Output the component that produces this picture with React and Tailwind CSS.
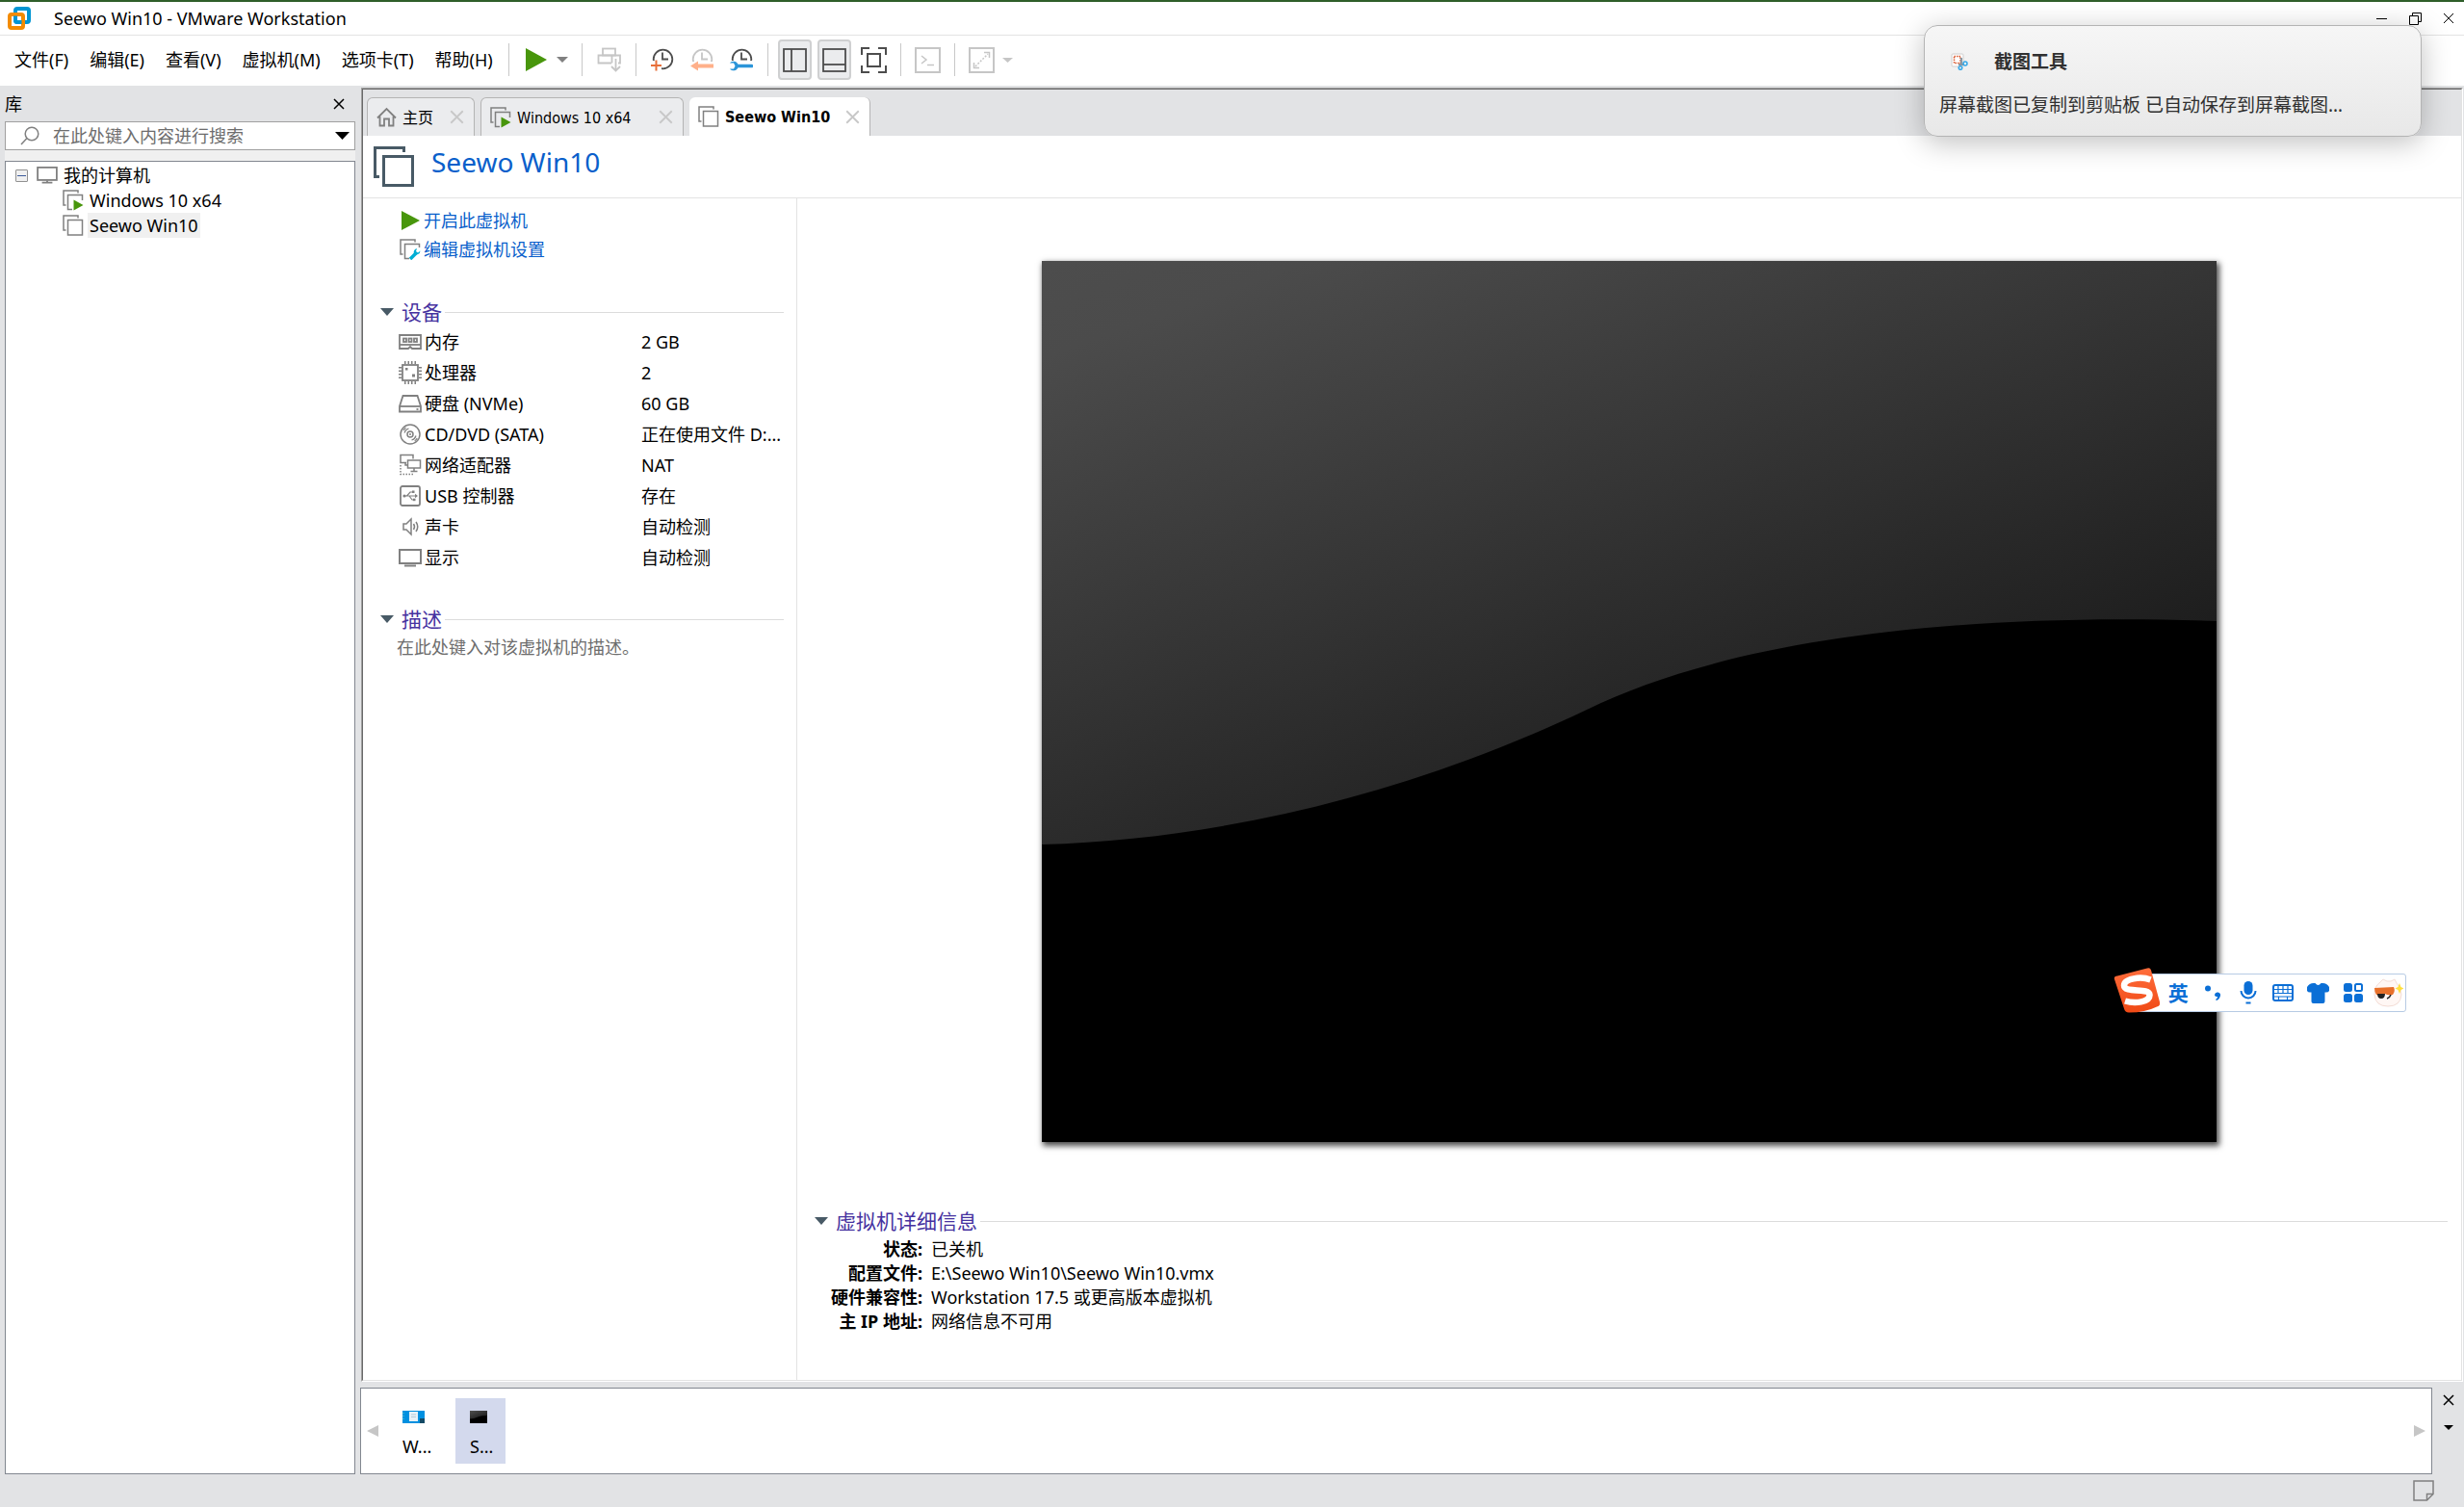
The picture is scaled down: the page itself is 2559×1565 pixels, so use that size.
import React from "react";

const UI = "font-['Noto_Sans','Noto_Sans_CJK_SC',sans-serif]";
const TAB = "font-['DejaVu_Sans_Condensed','Noto_Sans_CJK_SC',sans-serif]";

/* ---------- icons ---------- */

function Logo() {
  return (
    <svg className="size-6" viewBox="0 0 24 24" fill="none" strokeWidth="4">
      <rect x="8" y="2" width="14" height="14" rx="2" stroke="#0095d3" />
      <rect x="2" y="8" width="14" height="14" rx="2" stroke="#f38b00" />
      <path d="M8 9.500v4.500q0 2 2 2h4.500" stroke="#0095d3" />
    </svg>
  );
}

function Caret({ className }) {
  return (
    <svg className={className} viewBox="0 0 14 8" preserveAspectRatio="none" fill="currentColor">
      <path d="M0 0h14L7 8z" />
    </svg>
  );
}

function Cross({ className, strokeWidth = 1.500 }) {
  return (
    <svg className={className} viewBox="0 0 12 12" fill="none" stroke="currentColor" strokeWidth={strokeWidth}>
      <path d="M1 1l10 10M11 1L1 11" />
    </svg>
  );
}

function Play({ className }) {
  return (
    <svg className={className} viewBox="0 0 20 22" preserveAspectRatio="none" fill="#48960c">
      <path d="M0 0l20 11L0 22z" />
    </svg>
  );
}

function VmIcon({ badge }) {
  return (
    <svg className="size-[22px] shrink-0" viewBox="0 0 22 22" fill="none" stroke="#808080" strokeWidth="1.500">
      <path d="M3.500 16H1V1h15v2.500" />
      {badge === "play" && (
        <>
          <path d="M10 20.500H5.500v-15h15V11" />
          <path d="M11.500 10.500l10 5.500-10 5.500z" fill="#48960c" stroke="none" />
        </>
      )}
      {badge === "wrench" && (
        <>
          <path d="M10 20.500H5.500v-15h15V9" />
          <path d="M11 21l6-6" stroke="#00aed4" strokeWidth="3.500" />
          <path d="M21.500 12.500l-2.500 2-2-1.500 1-3a4 4 0 00-3 5.500 4 4 0 006.500-3z" fill="#00aed4" stroke="none" />
        </>
      )}
      {!badge && <rect x="5.500" y="5.500" width="15" height="15.500" />}
    </svg>
  );
}

function Monitor({ className }) {
  return (
    <svg className={className} viewBox="0 0 24 20" fill="none" stroke="#808080">
      <rect x="1" y="1" width="22" height="14.500" strokeWidth="2" />
      <path d="M12 16v2M6 18.500h12" strokeWidth="2" />
    </svg>
  );
}

const deviceIcons = {
  memory: (
    <g strokeWidth="1.800">
      <path d="M1 5h22v14H14l-2-2-2 2H1z" />
      <rect x="5" y="8.500" width="3" height="3.500" />
      <rect x="10.500" y="8.500" width="3" height="3.500" />
      <rect x="16" y="8.500" width="3" height="3.500" />
      <path d="M1 15h22" />
    </g>
  ),
  cpu: (
    <g strokeWidth="1.800">
      <rect x="4" y="4" width="16" height="16" />
      <path d="M6 1.500h12M6 22.500h12" strokeWidth="3" strokeDasharray="1.500 2" />
      <path d="M1.500 6v12M22.500 6v12" strokeWidth="3" strokeDasharray="1.500 2" />
      <rect x="7" y="7" width="2.500" height="2.500" fill="#808080" stroke="none" />
      <rect x="14" y="13.500" width="3" height="3" fill="#808080" stroke="none" />
    </g>
  ),
  disk: (
    <g strokeWidth="1.800">
      <path d="M4.500 4h15L23 15v5.500H1V15z" />
      <path d="M1 15h22" />
      <path d="M18.500 18h2" />
    </g>
  ),
  cd: (
    <g strokeWidth="1.500">
      <circle cx="12" cy="12" r="10" />
      <circle cx="12" cy="12" r="3" />
      <circle cx="12" cy="12" r="1" fill="#808080" stroke="none" />
      <path d="M6 10.500a6.500 6.500 0 014.500-4.500M5 8a8 8 0 012.500-2.800M18 13.500a6.500 6.500 0 01-4.500 4.500M19.200 16a8 8 0 01-2.500 2.800" strokeWidth="1.200" />
    </g>
  ),
  net: (
    <g strokeWidth="1.500">
      <path d="M8 9.500H2v-8h13v4" />
      <rect x="9.500" y="7" width="13" height="8" />
      <path d="M16 15v3M12.500 18.500h7" />
      <path d="M7 10v2h2.500" />
      <path d="M2 12v9.500h14" strokeDasharray="1.500 1.500" />
    </g>
  ),
  usb: (
    <g strokeWidth="1.800">
      <rect x="2" y="2" width="20" height="20" rx="2" />
      <path d="M5 12h14M8.500 12l3.500-4h2.500M11 12l3 4h2" strokeWidth="1.200" />
      <circle cx="6" cy="12" r="1.600" fill="#808080" stroke="none" />
      <path d="M17 9.800l3 2.200-3 2.200z" fill="#808080" stroke="none" />
      <rect x="14" y="6.500" width="2.500" height="2.500" fill="#808080" stroke="none" />
      <rect x="15" y="14.700" width="2.500" height="2.500" fill="#808080" stroke="none" />
    </g>
  ),
  sound: (
    <g strokeWidth="1.500">
      <path d="M5 9h3l5-5v16l-5-5H5z" />
      <path d="M15.500 9q2 3 0 6M18 7q3.500 5 0 10" />
    </g>
  ),
  display: (
    <g strokeWidth="2">
      <rect x="1" y="4" width="22" height="14" />
      <path d="M6 20.500h12" />
    </g>
  ),
};

function DeviceIcon({ name }) {
  return (
    <svg className="size-6 shrink-0" viewBox="0 0 24 24" fill="none" stroke="#808080">
      {deviceIcons[name]}
    </svg>
  );
}

function ClockIcon({ color, children }) {
  return (
    <svg className="size-6" viewBox="0 0 24 24" fill="none">
      <circle cx="12.500" cy="11.500" r="9.800" stroke={color} strokeWidth="1.800" />
      <path d="M12 4.500v7h6" stroke={color} strokeWidth="1.800" />
      {children}
    </svg>
  );
}

/* The default console wallpaper: a grey sheen over a black wave. */
function Screen({ className, id }) {
  return (
    <svg className={className} viewBox="0 0 1220 915" preserveAspectRatio="none" role="img" aria-label="虚拟机屏幕">
      <defs>
        <linearGradient id={id} gradientUnits="userSpaceOnUse" x1="0" y1="0" x2="270" y2="746">
          <stop offset="0" stopColor="#4d4d4d" />
          <stop offset="0.120" stopColor="#4b4b4b" />
          <stop offset="1" stopColor="#1c1c1c" />
        </linearGradient>
      </defs>
      <rect width="1220" height="915" fill={`url(#${id})`} />
      <path d="M0 606C190 601 390 550 566 466C700 400 920 364 1220 374V915H0z" fill="#000" />
    </svg>
  );
}

/* ---------- window chrome ---------- */

function TitleBar() {
  return (
    <header className="flex h-[35px] items-center border-b border-[#e3e3e3] bg-white pr-1 pl-2">
      <Logo />
      <h1 className="ml-6 text-[18px] leading-6">Seewo Win10 - VMware Workstation</h1>
      <div className="ml-auto flex items-center gap-[11px]">
        <button aria-label="最小化" className="flex size-6 items-center justify-center">
          <span className="h-px w-[11px] bg-black" />
        </button>
        <button aria-label="还原" className="flex size-6 items-center justify-center">
          <svg className="size-[13px]" viewBox="0 0 13 13" fill="none" stroke="#000">
            <path d="M.5 3.500h9v9h-9zM3.500 3V.5h9v9H10" />
          </svg>
        </button>
        <button aria-label="关闭" className="flex size-6 items-center justify-center">
          <Cross className="size-3" strokeWidth={1} />
        </button>
      </div>
    </header>
  );
}

const menus = ["文件(F)", "编辑(E)", "查看(V)", "虚拟机(M)", "选项卡(T)", "帮助(H)"];

function Separator() {
  return <span className="h-[34px] w-px bg-[#c8c8c8]" />;
}

function Toolbar() {
  return (
    <div className="flex h-[52px] items-center bg-white pb-[2px] pl-1">
      <nav className="flex">
        {menus.map((m) => (
          <button key={m} className="px-[11px] text-[18px] leading-6 whitespace-nowrap">
            {m}
          </button>
        ))}
      </nav>
      <div className="ml-[5px] flex items-center">
        <Separator />
        <button aria-label="开启" className="ml-[17px]">
          <Play className="h-6 w-[22px]" />
        </button>
        <button aria-label="电源选项" className="ml-[10px] text-[#808080]">
          <Caret className="h-[6px] w-3" />
        </button>
        <span className="ml-[14px] flex">
          <Separator />
        </span>
        <button aria-label="发送 Ctrl+Alt+Del" className="ml-[15px]">
          <svg className="size-[26px]" viewBox="0 0 26 26" fill="none" stroke="#c6c6c6" strokeWidth="1.800">
            <rect x="6" y="1.500" width="13" height="7" />
            <path d="M15 16.500H1.500v-8h22.500v8h-2M15.500 8.500v8" />
            <path d="M19.500 12v12M15 20l4.500 4.500L24 20" />
          </svg>
        </button>
        <span className="ml-[14px] flex">
          <Separator />
        </span>
        <button aria-label="拍摄快照" className="ml-[15px]">
          <ClockIcon color="#4d4d4d">
            <rect x="0" y="13" width="11" height="11" fill="#fff" />
            <path d="M5.500 12.500v11M0 18h11" stroke="#e8703a" strokeWidth="2" />
          </ClockIcon>
        </button>
        <button aria-label="恢复快照" className="ml-[17px]">
          <ClockIcon color="#c6c6c6">
            <rect x="0" y="14" width="24" height="10" fill="#fff" />
            <path d="M0 18.500l8-5v3h16v4H8v3z" fill="#ffb08a" />
          </ClockIcon>
        </button>
        <button aria-label="管理快照" className="ml-[17px]">
          <ClockIcon color="#4d4d4d">
            <rect x="0" y="13" width="24" height="11" fill="#fff" />
            <path d="M0 15.500h4l1.500 3L4 21.500H0a5 5 0 008.500-1.200H22.500a1.800 1.800 0 000-3.600H8.500A5 5 0 000 15.500z" fill="#2b95d9" />
          </ClockIcon>
        </button>
        <span className="ml-[15px] flex">
          <Separator />
        </span>
        <button aria-label="显示库" aria-pressed="true" className="ml-[10px] flex h-[42px] w-[35px] items-center justify-center rounded-[4px] border-2 border-[#cfd0d1] bg-[#ebecee]">
          <svg className="size-[25px] shrink-0" viewBox="0 0 25 25" fill="none" stroke="#4d4d4d" strokeWidth="1.800">
            <rect x="1" y="1" width="23" height="23" />
            <path d="M9 1v23" />
          </svg>
        </button>
        <button aria-label="显示缩略图栏" aria-pressed="true" className="ml-[6px] flex h-[42px] w-[35px] items-center justify-center rounded-[4px] border-2 border-[#cfd0d1] bg-[#ebecee]">
          <svg className="size-[25px] shrink-0" viewBox="0 0 25 25" fill="none" stroke="#4d4d4d" strokeWidth="1.800">
            <rect x="1" y="1" width="23" height="23" />
            <path d="M1 17h23" />
          </svg>
        </button>
        <button aria-label="全屏" className="ml-[10px]">
          <svg className="size-[27px]" viewBox="0 0 27 27" fill="none" stroke="#4d4d4d" strokeWidth="2">
            <path d="M1 8V1h8M18 1h8v7M26 19v7h-8M9 26H1v-7" />
            <rect x="7" y="7" width="13" height="13" />
          </svg>
        </button>
        <span className="ml-[14px] flex">
          <Separator />
        </span>
        <button aria-label="控制台" className="ml-[14px]">
          <svg className="size-[27px]" viewBox="0 0 27 27" fill="none" stroke="#c6c6c6" strokeWidth="2">
            <rect x="1" y="1" width="25" height="25" />
            <path d="M7 9l5 4-5 4M13 18.500h7" strokeWidth="1.500" />
          </svg>
        </button>
        <span className="ml-[14px] flex">
          <Separator />
        </span>
        <button aria-label="拉伸客户机" className="ml-[14px]">
          <svg className="size-[27px]" viewBox="0 0 27 27" fill="none" stroke="#c6c6c6">
            <rect x="1" y="1" width="25" height="25" strokeWidth="2" />
            <path d="M16 5.500h5.500V11M5.500 16v5.500H11" strokeWidth="1.500" />
            <path d="M7 20L20 7" strokeWidth="1.500" strokeDasharray="2 1.500" />
          </svg>
        </button>
        <button aria-label="拉伸选项" className="ml-[8px] text-[#c6c6c6]">
          <Caret className="h-[5px] w-[11px]" />
        </button>
      </div>
    </div>
  );
}

/* ---------- library ---------- */

function Library() {
  return (
    <aside className="flex w-[364px] shrink-0 flex-col">
      <div className="flex h-[37px] items-center justify-between pr-[11px] text-[18px] leading-6">
        <h2>库</h2>
        <button aria-label="关闭库">
          <Cross className="size-3" />
        </button>
      </div>
      <div className="flex h-[30px] items-center border border-[#a0a0a0] bg-white pr-[5px] pl-[15px]">
        <svg className="size-5" viewBox="0 0 20 20" fill="none" stroke="#808080" strokeWidth="1.500">
          <circle cx="12" cy="8" r="6.800" />
          <path d="M7 12.500L1 19" />
        </svg>
        <input
          aria-label="搜索"
          placeholder="在此处键入内容进行搜索"
          className="ml-[14px] h-6 min-w-0 flex-1 text-[18px] leading-6 outline-none placeholder:text-[#6d6d6d]"
        />
        <button aria-label="搜索选项">
          <Caret className="h-2 w-[15px]" />
        </button>
      </div>
      <div className="h-[11px] bg-[#f0f0f0]" />
      <div className="flex-1 border border-[#828790] bg-white pt-px text-[18px]">
        <div className="flex h-[26px] items-center pl-[10px]">
          <button aria-label="折叠" className="flex size-[13px] items-center justify-center rounded-[1px] border border-[#919191] bg-[#f0f0f0]">
            <span className="h-px w-[9px] bg-[#3c5a9a]" />
          </button>
          <Monitor className="ml-[9px] h-[18px] w-[22px]" />
          <span className="ml-[6px] leading-[26px]">我的计算机</span>
        </div>
        <ul className="pl-[59px]">
          <li className="flex h-[26px] items-center gap-[4px]">
            <VmIcon badge="play" />
            <span className="px-[2px] leading-[26px]">Windows 10 x64</span>
          </li>
          <li className="flex h-[26px] items-center gap-[4px]">
            <VmIcon />
            <span className="bg-[#f0f0f0] px-[2px] leading-[26px]">Seewo Win10</span>
          </li>
        </ul>
      </div>
    </aside>
  );
}

/* ---------- main view ---------- */

function Tab({ icon, label, active, className }) {
  return (
    <div
      className={`flex items-center rounded-t-[6px] pr-[10px] pl-[9px] ${
        active ? "border-r border-[#b4b4b4] bg-white font-bold" : "border border-b-0 border-[#b4b4b4] bg-[#ebecee]"
      } ${className}`}
    >
      {icon}
      <button className="ml-[6px] pt-[2px] text-[16px] leading-6 whitespace-nowrap">{label}</button>
      <button aria-label="关闭选项卡" className="ml-auto text-[#c8c8c8]">
        <Cross className="size-[15px]" />
      </button>
    </div>
  );
}

function Tabs() {
  return (
    <div className={`flex h-12 gap-[6px] bg-[#e2e3e5] pt-2 pl-1 ${TAB}`}>
      <Tab
        className="w-[112px]"
        label="主页"
        icon={
          <svg className="size-[21px] shrink-0" viewBox="0 0 21 21" fill="none" stroke="#808080" strokeWidth="1.800">
            <path d="M1 11.500L10.500 2l9.500 9.500M3.500 10v9.500h4.500v-7h5v7h4.500V10" />
          </svg>
        }
      />
      <Tab className="w-[211px]" label="Windows 10 x64" icon={<VmIcon badge="play" />} />
      <Tab className="w-[188px]" label="Seewo Win10" icon={<VmIcon />} active />
    </div>
  );
}

function SectionTitle({ children }) {
  return (
    <div className="flex h-[30px] items-center">
      <span className="text-[#485a66]">
        <Caret className="h-2 w-[14px]" />
      </span>
      <h3 className="ml-2 text-[21px] leading-[30px] text-[#4632a0]">{children}</h3>
      <span className="ml-[3px] h-px flex-1 bg-[#dcdcdc]" />
    </div>
  );
}

const devices = [
  ["memory", "内存", "2 GB"],
  ["cpu", "处理器", "2"],
  ["disk", "硬盘 (NVMe)", "60 GB"],
  ["cd", "CD/DVD (SATA)", "正在使用文件 D:..."],
  ["net", "网络适配器", "NAT"],
  ["usb", "USB 控制器", "存在"],
  ["sound", "声卡", "自动检测"],
  ["display", "显示", "自动检测"],
];

const details = [
  ["状态:", "已关机"],
  ["配置文件:", "E:\\Seewo Win10\\Seewo Win10.vmx"],
  ["硬件兼容性:", "Workstation 17.5 或更高版本虚拟机"],
  ["主 IP 地址:", "网络信息不可用"],
];

function Summary() {
  return (
    <section className="w-[451px] shrink-0 border-r border-[#e3e3e3] pt-2 pr-[13px] pl-[18px] text-[18px]">
      <div className="pl-5 text-[#0a5fcb]">
        <a href="#power-on" className="flex h-[30px] items-center gap-[4px] pl-[2px] leading-[30px]">
          <Play className="h-5 w-[19px]" />
          开启此虚拟机
        </a>
        <a href="#settings" className="flex h-[30px] items-center gap-[3px] leading-[30px]">
          <VmIcon badge="wrench" />
          编辑虚拟机设置
        </a>
      </div>
      <div className="mt-[35px]">
        <SectionTitle>设备</SectionTitle>
        <table className="ml-[19px]">
          <tbody>
            {devices.map(([icon, name, value]) => (
              <tr key={name} className="h-8">
                <th scope="row" className="w-[252px] p-0 text-left font-normal">
                  <span className="flex h-8 items-center gap-[3px] leading-8">
                    <DeviceIcon name={icon} />
                    {name}
                  </span>
                </th>
                <td className="p-0 leading-8 whitespace-nowrap">{value}</td>
              </tr>
            ))}
          </tbody>
        </table>
      </div>
      <div className="mt-[33px]">
        <SectionTitle>描述</SectionTitle>
        <p className="ml-[17px] leading-7 text-[#6d6d6d]">在此处键入对该虚拟机的描述。</p>
      </div>
    </section>
  );
}

function Console() {
  return (
    <section className="min-w-0 flex-1 pt-[65px]">
      <div className="flex justify-center">
        <Screen id="sheen" className="aspect-[4/3] w-[1220px] max-w-full shadow-[2px_3px_6px_1px_rgba(0,0,0,0.7)]" />
      </div>
      <div className="mt-[67px] mr-[14px] ml-[18px]">
        <SectionTitle>虚拟机详细信息</SectionTitle>
        <dl className="mt-[2px] grid grid-cols-[112px_1fr] gap-x-[9px] text-[18px] leading-[25px]">
          {details.map(([term, value]) => (
            <React.Fragment key={term}>
              <dt className="text-right font-bold whitespace-nowrap">{term}</dt>
              <dd>{value}</dd>
            </React.Fragment>
          ))}
        </dl>
      </div>
    </section>
  );
}

function MainView() {
  return (
    <main className="mt-[2px] mr-px ml-px flex flex-1 flex-col border border-t-[#a0a0a0] border-r-white border-b-white border-l-[#a0a0a0]">
      <div className="flex flex-1 flex-col border border-t-[#696969] border-r-[#e3e3e3] border-b-[#e3e3e3] border-l-[#696969] bg-white">
        <Tabs />
        <div className="flex h-[65px] items-start border-b border-[#e3e3e3] pt-[11px] pl-[11px]">
          <svg className="size-[42px]" viewBox="0 0 42 42" fill="none" stroke="#485a66" strokeWidth="3">
            <path d="M6 31.500H1.500v-30h30V6" />
            <rect x="10.500" y="10.500" width="30" height="30" />
          </svg>
          <h2 className="ml-[18px] text-[28px] leading-8 text-[#0a5fcb]">Seewo Win10</h2>
        </div>
        <div className="flex flex-1">
          <Summary />
          <Console />
        </div>
      </div>
    </main>
  );
}

function ThumbnailBar() {
  return (
    <div className="mt-[6px] flex h-[90px]">
      <div className="flex flex-1 items-center border border-[#828790] bg-white px-[6px] text-[18px] leading-6">
        <button aria-label="向左滚动" className="text-[#c6c6c6]">
          <svg className="size-3" viewBox="0 0 12 12" fill="currentColor">
            <path d="M12 0v12L0 6z" />
          </svg>
        </button>
        <button className="ml-[10px] flex h-[68px] w-[52px] flex-col items-start pt-[13px] pl-[15px]">
          <svg className="h-[13px] w-[23px]" viewBox="0 0 23 13">
            <rect width="23" height="13" fill="#0090e0" />
            <rect x="7" y="1" width="9" height="10" fill="#e6f1f8" />
            <path d="M9 4h5M9 6.500h5" stroke="#b5cbd8" />
            <rect x="18" y="8" width="5" height="5" fill="#134a66" />
            <path d="M1 2v8" stroke="#7fd0c0" strokeDasharray="1 2" />
          </svg>
          <span className="mt-3">W...</span>
        </button>
        <button className="ml-[18px] flex h-[68px] w-[52px] flex-col items-start bg-[#d3d9ed] pt-[13px] pl-[15px]">
          <Screen id="sheen-thumb" className="h-[13px] w-[18px]" />
          <span className="mt-3">S...</span>
        </button>
        <button aria-label="向右滚动" className="ml-auto text-[#c6c6c6]">
          <svg className="size-3" viewBox="0 0 12 12" fill="currentColor">
            <path d="M0 0v12l12-6z" />
          </svg>
        </button>
      </div>
      <div className="flex w-[33px] flex-col items-center gap-5 pt-[7px]">
        <button aria-label="关闭缩略图栏">
          <Cross className="size-3" />
        </button>
        <button aria-label="缩略图选项">
          <Caret className="h-[5px] w-[10px]" />
        </button>
      </div>
    </div>
  );
}

/* ---------- overlays ---------- */

function Toast() {
  return (
    <div
      role="status"
      className="absolute top-[26px] right-11 w-[517px] rounded-[14px] border border-[#b4b4b4] bg-linear-to-b from-[#f6f6f6] to-[#e8e8e8] px-[15px] pt-[25px] pb-5 text-[19px] text-[#303030] shadow-[0_6px_30px_rgba(0,0,0,0.25)]"
    >
      <div className="flex items-center pl-3">
        <svg className="size-[18px]" viewBox="0 0 18 18" fill="none">
          <rect x="1" y="1" width="12" height="13" rx="1" fill="#fff" stroke="#cfcfcf" />
          <rect x="3.500" y="3.500" width="6.500" height="7" stroke="#d8572c" strokeWidth="1.500" strokeDasharray="1.500 1" />
          <path d="M11 5v7M8 12h6" stroke="#8a97a3" strokeWidth="2" />
          <circle cx="15" cy="11" r="2" stroke="#35a8e8" strokeWidth="1.500" />
          <circle cx="10" cy="15.500" r="1.800" stroke="#35a8e8" strokeWidth="1.500" />
        </svg>
        <strong className="ml-[27px] leading-6 font-bold">截图工具</strong>
      </div>
      <p className="mt-[21px] leading-6 whitespace-nowrap">屏幕截图已复制到剪贴板 已自动保存到屏幕截图…</p>
    </div>
  );
}

function ImeBar() {
  return (
    <div className="absolute top-[1011px] right-[60px] flex h-10 w-[280px] items-center rounded-[3px] border border-[#b7cbe4] bg-white text-[#0b6fd6]">
      <svg className="absolute -top-2 -left-[25px] size-[48px]" viewBox="0 0 48 48" role="img" aria-label="搜狗输入法">
        <defs>
          <linearGradient id="ime" x1="0" y1="0" x2="0" y2="1">
            <stop offset="0" stopColor="#ff6d3c" />
            <stop offset="1" stopColor="#f04a16" />
          </linearGradient>
        </defs>
        <path d="M4 9.500L35 1.500q3-1 4 2l9 33q1 4-3 5-12 6-29 6-4 0-5-4L1 13q-1-3 3-3.500z" fill="url(#ime)" />
        <path d="M38.500 13.500C28 9.500 11 12.500 11 19.500C11 27.500 37 21.500 37.500 29C38 37 22 38.500 12 35.500" fill="none" stroke="#fff" strokeWidth="6.500" />
      </svg>
      <div className="ml-6 grid flex-1 grid-cols-7 items-center justify-items-center">
        <button className="text-[21px] leading-6 font-bold">英</button>
        <button aria-label="标点">
          <svg className="size-[18px]" viewBox="0 0 18 18" fill="currentColor">
            <circle cx="4" cy="4.500" r="3" />
            <path d="M11 11a3 3 0 116 1q-1 4-4 5l-1-1q2-1 2-3-3 0-3-2z" />
          </svg>
        </button>
        <button aria-label="语音">
          <svg className="h-6 w-[18px]" viewBox="0 0 18 24" fill="none" stroke="currentColor" strokeWidth="2">
            <rect x="4.500" y="0" width="9" height="14" rx="4.500" fill="currentColor" stroke="none" />
            <path d="M1.500 10a7.500 7.500 0 0015 0M6.500 22.500h5" />
          </svg>
        </button>
        <button aria-label="软键盘">
          <svg className="h-[18px] w-[22px]" viewBox="0 0 22 18" fill="none" stroke="currentColor" strokeWidth="2">
            <rect x="1" y="1" width="20" height="16" rx="2" />
            <path d="M1 5.500h20M1 9.500h20M6 1v9M11 1v9M16 1v9M1 13h20M6.500 13v4M15.500 13v4" strokeWidth="1.200" />
          </svg>
        </button>
        <button aria-label="皮肤">
          <svg className="h-[21px] w-[23px]" viewBox="0 0 23 21" fill="currentColor">
            <path d="M6.500 0h2q3 4 6 0h2q4 0 6.500 4v4q-1 1.500-3 1.500h-1.500V19q0 2-2 2h-10q-2 0-2-2V9.500H3Q1 9.500 0 8V4q2.500-4 6.500-4z" />
          </svg>
        </button>
        <button aria-label="工具箱">
          <svg className="size-5" viewBox="0 0 20 20" fill="currentColor">
            <rect width="9" height="9" rx="2.500" />
            <rect y="11" width="9" height="9" rx="2.500" />
            <rect x="11" y="11" width="9" height="9" rx="2.500" />
            <rect x="12" y="1" width="7" height="7" rx="1.500" fill="none" stroke="currentColor" strokeWidth="2" />
          </svg>
        </button>
        <button aria-label="助手">
          <svg className="size-8" viewBox="0 0 32 32">
            <path d="M2 18Q2 9 8 5l3-3 4 2 4 0 4-2 2 4q5 5 5 12-1 12-14 12T2 18z" fill="#fff7f4" stroke="#f3dcd5" />
            <path d="M2 11l20-1q2 4-1 8-5 1-8-1-5 2-9 1-2-3-2-7z" fill="#e8702a" />
            <path d="M5 17h8q0 5-4 5t-4-5z" fill="#222" />
            <path d="M15 22q3-1 4-4" stroke="#222" strokeWidth="1.500" fill="none" />
            <path d="M28 6l1.500 4 3 1.500-3 1.500-1.500 4-1.500-4-3-1.500 3-1.500z" fill="#ffdf3d" />
          </svg>
        </button>
      </div>
    </div>
  );
}

export default function App() {
  return (
    <div className={`relative flex min-h-screen flex-col bg-[#e2e3e5] text-black ${UI}`}>
      <div className="h-[2px] bg-[#2f5f2a]" />
      <TitleBar />
      <Toolbar />
      <div className="flex flex-1 pl-[5px]">
        <Library />
        <div className="ml-[5px] flex min-w-0 flex-1 flex-col">
          <MainView />
          <ThumbnailBar />
        </div>
      </div>
      <footer className="flex h-[34px] items-center justify-end pr-[31px]">
        <svg className="size-[22px]" viewBox="0 0 22 22" fill="none" stroke="#808080" strokeWidth="1.500">
          <path d="M1 1h20v13.500L14.500 21H1z" />
          <path d="M21 14.500h-6.500V21" />
        </svg>
      </footer>
      <Toast />
      <ImeBar />
    </div>
  );
}
